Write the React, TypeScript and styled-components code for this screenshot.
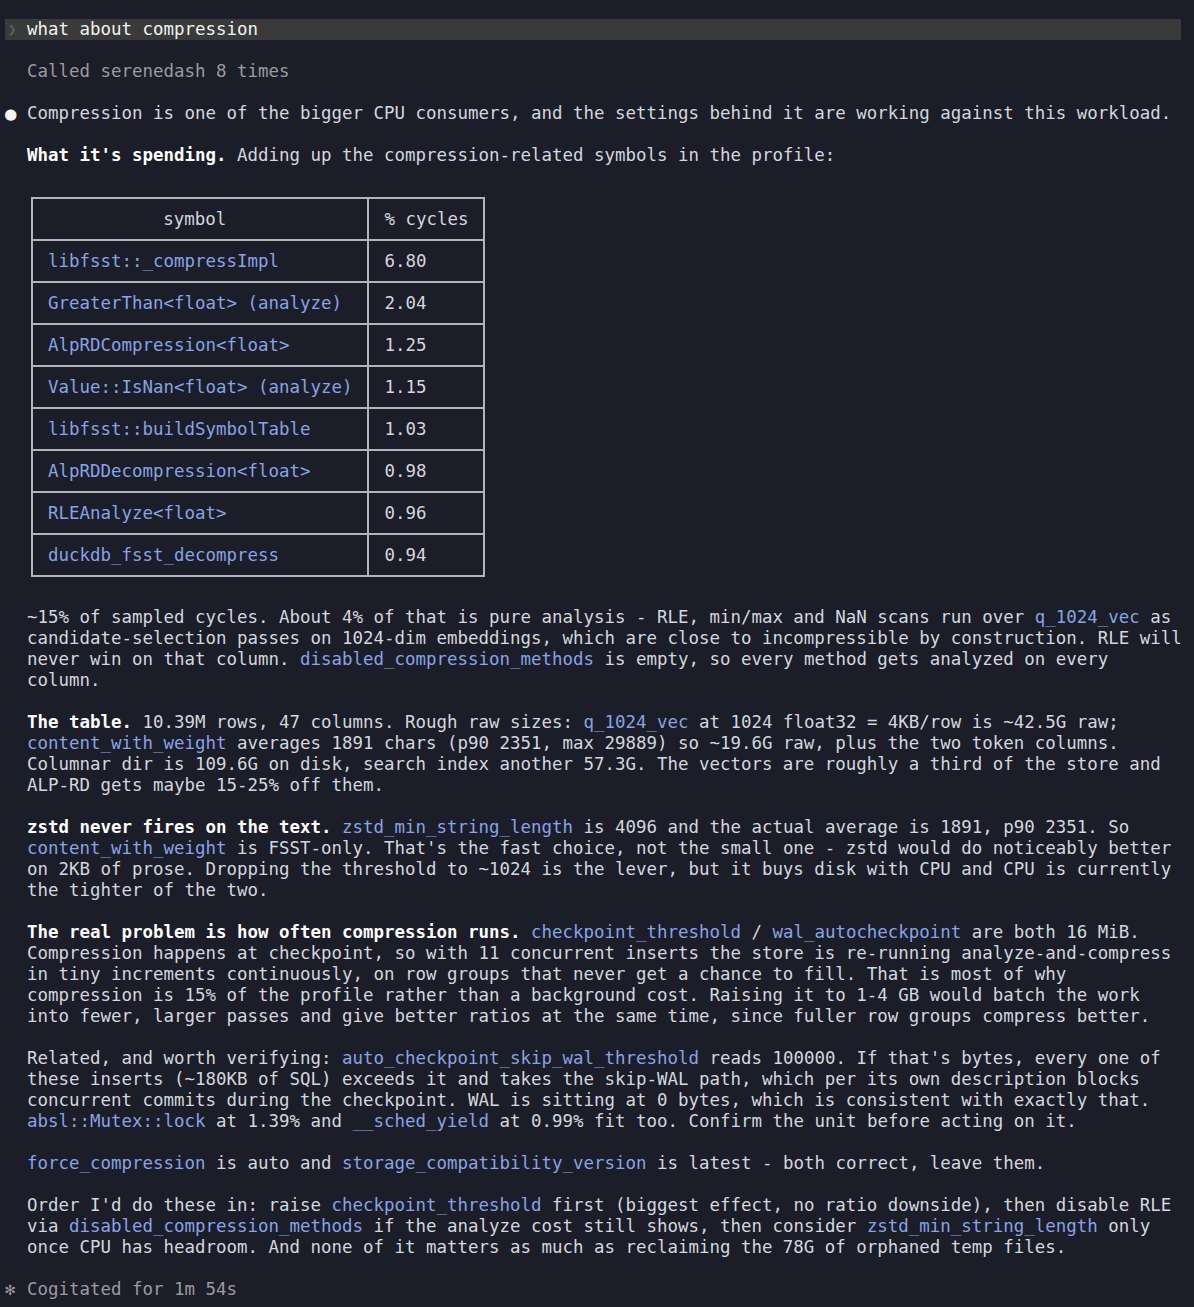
import React from "react";
import styled, { createGlobalStyle } from "styled-components";

const GlobalStyle = createGlobalStyle`
  html, body {
    margin: 0;
    padding: 0;
    background: #1b1d28;
  }
  body {
    font-family: "DejaVu Sans Mono", "Liberation Mono", monospace;
    font-size: 17.45px;
    line-height: 21px;
    color: #d3d7df;
  }
`;

const Screen = styled.div`
  padding: 19px 13px 8px 5px;
  min-height: 1307px;
  box-sizing: border-box;
  background: #1b1d28;
`;

const PromptBar = styled.div`
  display: grid;
  grid-template-columns: 22px 1fr;
  background: #3a3a3b;
  color: #f2f2f2;
  height: 21px;
`;

const Row = styled.div<{ $gap?: number }>`
  display: grid;
  grid-template-columns: 22px 1fr;
  margin-top: ${(p) => p.$gap ?? 21}px;
`;

const Marker = styled.span<{ $tone: "chevron" | "bullet" | "spark" }>`
  color: ${(p) =>
    p.$tone === "chevron" ? "#5e5f63" : p.$tone === "bullet" ? "#f4f4f4" : "#9a9a9c"};
  font-size: ${(p) => (p.$tone === "bullet" ? "19px" : p.$tone === "chevron" ? "14px" : "17px")};
  padding-left: ${(p) => (p.$tone === "chevron" ? "3px" : "0")};
  white-space: pre;
`;

const Muted = styled.div`
  color: #9b9b9d;
  white-space: pre;
`;

const Text = styled.div`
  white-space: pre;
`;

const Para = styled.p<{ $flush?: boolean }>`
  margin: ${(p) => (p.$flush ? 0 : 21)}px 0 0;
  white-space: pre;
`;

const Strong = styled.strong`
  color: #ffffff;
  font-weight: 700;
`;

const Code = styled.span`
  color: #88a3e6;
`;

const TableWrap = styled.div`
  margin: 31px 0 30px 4px;
`;

const Table = styled.table`
  border-collapse: collapse;
  border: 2px solid #b3b4b8;
`;

const Cell = styled.td<{ $kind: "symbol" | "value"; $head?: boolean }>`
  border: 2px solid #b3b4b8;
  height: 40px;
  padding: ${(p) => (p.$head && p.$kind === "symbol" ? "0 26px 0 15px" : "0 15px")};
  box-sizing: content-box;
  width: ${(p) => (p.$kind === "symbol" ? (p.$head ? "293px" : "304px") : "82px")};
  text-align: ${(p) => (p.$head && p.$kind === "symbol" ? "center" : "left")};
  color: ${(p) => (p.$kind === "symbol" && !p.$head ? "#88a3e6" : "#d3d7df")};
  white-space: pre;
  line-height: 21px;
  vertical-align: middle;
`;

const rows: [string, string][] = [
  ["libfsst::_compressImpl", "6.80"],
  ["GreaterThan<float> (analyze)", "2.04"],
  ["AlpRDCompression<float>", "1.25"],
  ["Value::IsNan<float> (analyze)", "1.15"],
  ["libfsst::buildSymbolTable", "1.03"],
  ["AlpRDDecompression<float>", "0.98"],
  ["RLEAnalyze<float>", "0.96"],
  ["duckdb_fsst_decompress", "0.94"],
];

export default function App() {
  return (
    <>
      <GlobalStyle />
      <Screen>
        <PromptBar>
          <Marker $tone="chevron">❯</Marker>
          <Text>what about compression</Text>
        </PromptBar>

        <Row>
          <span />
          <Muted>Called serenedash 8 times</Muted>
        </Row>

        <Row>
          <Marker $tone="bullet">●</Marker>
          <div>
            <Text>
              Compression is one of the bigger CPU consumers, and the settings behind it are working against this workload.
            </Text>
            <Para>
              <Strong>What it's spending.</Strong> Adding up the compression-related symbols in the profile:
            </Para>

            <TableWrap>
              <Table>
                <tbody>
                  <tr>
                    <Cell $kind="symbol" $head>symbol</Cell>
                    <Cell $kind="value" $head>% cycles</Cell>
                  </tr>
                  {rows.map(([s, v]) => (
                    <tr key={s}>
                      <Cell $kind="symbol">{s}</Cell>
                      <Cell $kind="value">{v}</Cell>
                    </tr>
                  ))}
                </tbody>
              </Table>
            </TableWrap>

            <Para $flush>
              ~15% of sampled cycles. About 4% of that is pure analysis - RLE, min/max and NaN scans run over <Code>q_1024_vec</Code> as
              {"\n"}candidate-selection passes on 1024-dim embeddings, which are close to incompressible by construction. RLE will
              {"\n"}never win on that column. <Code>disabled_compression_methods</Code> is empty, so every method gets analyzed on every
              {"\n"}column.
            </Para>

            <Para>
              <Strong>The table.</Strong> 10.39M rows, 47 columns. Rough raw sizes: <Code>q_1024_vec</Code> at 1024 float32 = 4KB/row is ~42.5G raw;
              {"\n"}<Code>content_with_weight</Code> averages 1891 chars (p90 2351, max 29889) so ~19.6G raw, plus the two token columns.
              {"\n"}Columnar dir is 109.6G on disk, search index another 57.3G. The vectors are roughly a third of the store and
              {"\n"}ALP-RD gets maybe 15-25% off them.
            </Para>

            <Para>
              <Strong>zstd never fires on the text.</Strong> <Code>zstd_min_string_length</Code> is 4096 and the actual average is 1891, p90 2351. So
              {"\n"}<Code>content_with_weight</Code> is FSST-only. That's the fast choice, not the small one - zstd would do noticeably better
              {"\n"}on 2KB of prose. Dropping the threshold to ~1024 is the lever, but it buys disk with CPU and CPU is currently
              {"\n"}the tighter of the two.
            </Para>

            <Para>
              <Strong>The real problem is how often compression runs.</Strong> <Code>checkpoint_threshold</Code> / <Code>wal_autocheckpoint</Code> are both 16 MiB.
              {"\n"}Compression happens at checkpoint, so with 11 concurrent inserts the store is re-running analyze-and-compress
              {"\n"}in tiny increments continuously, on row groups that never get a chance to fill. That is most of why
              {"\n"}compression is 15% of the profile rather than a background cost. Raising it to 1-4 GB would batch the work
              {"\n"}into fewer, larger passes and give better ratios at the same time, since fuller row groups compress better.
            </Para>

            <Para>
              Related, and worth verifying: <Code>auto_checkpoint_skip_wal_threshold</Code> reads 100000. If that's bytes, every one of
              {"\n"}these inserts (~180KB of SQL) exceeds it and takes the skip-WAL path, which per its own description blocks
              {"\n"}concurrent commits during the checkpoint. WAL is sitting at 0 bytes, which is consistent with exactly that.
              {"\n"}<Code>absl::Mutex::lock</Code> at 1.39% and <Code>__sched_yield</Code> at 0.99% fit too. Confirm the unit before acting on it.
            </Para>

            <Para>
              <Code>force_compression</Code> is auto and <Code>storage_compatibility_version</Code> is latest - both correct, leave them.
            </Para>

            <Para>
              Order I'd do these in: raise <Code>checkpoint_threshold</Code> first (biggest effect, no ratio downside), then disable RLE
              {"\n"}via <Code>disabled_compression_methods</Code> if the analyze cost still shows, then consider <Code>zstd_min_string_length</Code> only
              {"\n"}once CPU has headroom. And none of it matters as much as reclaiming the 78G of orphaned temp files.
            </Para>
          </div>
        </Row>

        <Row>
          <Marker $tone="spark">✻</Marker>
          <Muted>Cogitated for 1m 54s</Muted>
        </Row>
      </Screen>
    </>
  );
}
